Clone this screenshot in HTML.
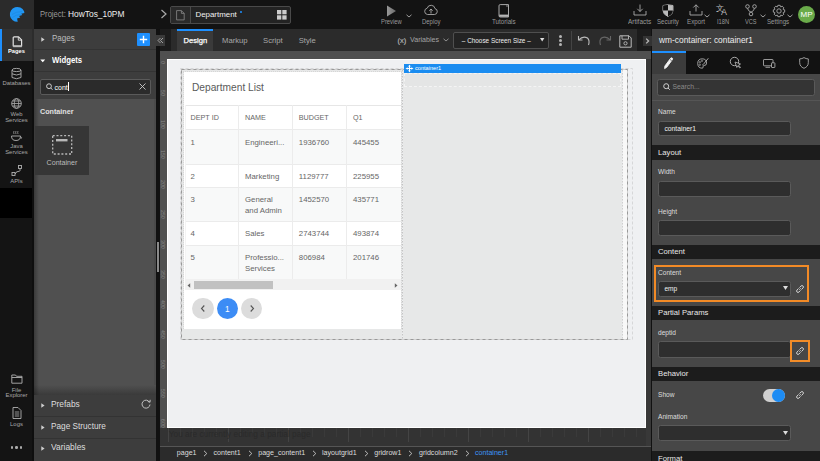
<!DOCTYPE html>
<html><head><meta charset="utf-8">
<style>
*{box-sizing:border-box;margin:0;padding:0}
html,body{width:820px;height:461px;overflow:hidden}
body{position:relative;background:#141414;font-family:"Liberation Sans",sans-serif;color:#ddd}
.a{position:absolute}
.t{position:absolute;white-space:nowrap;line-height:1}
svg{position:absolute;overflow:visible}
</style></head><body>
<div class="a" style="left:0px;top:0px;width:820px;height:29px;background:#131313;"></div>
<div class="a" style="left:0px;top:0px;width:34px;height:29px;background:#2b2b2b;"></div>
<div class="a" style="left:0px;top:29px;width:32px;height:432px;background:#141414;"></div>
<div class="a" style="left:32px;top:29px;width:2px;height:432px;background:#0e0e0e;"></div>
<div class="a" style="left:32px;top:29px;width:2px;height:32px;background:#2c2c2c;"></div>
<div class="a" style="left:0px;top:29px;width:32px;height:32px;background:#333;"></div>
<div class="a" style="left:0px;top:29px;width:2px;height:32px;background:#1e90ff;"></div>
<div class="a" style="left:0px;top:188px;width:32px;height:30px;background:#000;"></div>
<div class="a" style="left:34px;top:29px;width:122px;height:432px;background:#505050;"></div>
<div class="a" style="left:34px;top:29px;width:122px;height:21px;background:#3d3d3d;border-bottom:1px solid #333"></div>
<div class="a" style="left:34px;top:50px;width:122px;height:22px;background:#3d3d3d;border-bottom:1px solid #333"></div>
<div class="a" style="left:34px;top:72px;width:122px;height:27px;background:#3d3d3d;"></div>
<div class="a" style="left:34px;top:385px;width:122px;height:10px;background:linear-gradient(#505050,#3a3a3a);"></div>
<div class="a" style="left:34px;top:395px;width:122px;height:66px;background:#3d3d3d;"></div>
<div class="a" style="left:34px;top:416px;width:122px;height:1px;background:#333;"></div>
<div class="a" style="left:34px;top:438px;width:122px;height:1px;background:#333;"></div>
<div class="a" style="left:154px;top:99px;width:2px;height:286px;background:#4a4a4a;"></div>
<div class="a" style="left:34px;top:99px;width:5px;height:296px;background:linear-gradient(to right,rgba(0,0,0,0.28),rgba(0,0,0,0));"></div>
<div class="a" style="left:156px;top:29px;width:4px;height:432px;background:#111;"></div>
<div class="a" style="left:157px;top:242px;width:2px;height:30px;background:#8a8a8a;"></div>
<div class="a" style="left:160px;top:29px;width:492px;height:22px;background:#1c1c1c;"></div>
<div class="a" style="left:171px;top:29px;width:466px;height:22px;background:#2b2b2b;"></div>
<div class="a" style="left:177px;top:29px;width:36px;height:22px;background:#3a3a3a;border-top:2px solid #1e90ff"></div>
<div class="a" style="left:160px;top:51px;width:492px;height:395px;background:#333;"></div>
<div class="a" style="left:160px;top:51px;width:491px;height:8px;background:#505050;"></div>
<div class="a" style="left:160px;top:51px;width:7px;height:377px;background:#505050;"></div>
<div class="a" style="left:167px;top:59px;width:478.5px;height:369px;background:#eff0f2;border:1px solid #fff"></div>
<div class="a" style="left:160px;top:446px;width:492px;height:15px;background:#2b2b2b;border-top:1px solid #555"></div>
<div class="a" style="left:646px;top:59px;width:5px;height:387px;background:#383838;"></div>
<div class="a" style="left:651px;top:29px;width:1px;height:432px;background:#111;"></div>
<div class="a" style="left:652px;top:29px;width:168px;height:432px;background:#474747;"></div>
<div class="a" style="left:652px;top:29px;width:168px;height:22px;background:#404040;"></div>
<div class="a" style="left:652px;top:51px;width:168px;height:23px;background:#121212;"></div>
<div class="a" style="left:652px;top:51px;width:34px;height:23px;background:#3c3c3c;border-top:2px solid #1e90ff"></div>
<svg style="left:8px;top:6px" width="18" height="18" viewBox="0 0 18 18"><path d="M16.1 5.3 A7.45 7.45 0 1 0 9.7 15.8 L9.1 12.5 L12.2 11.4 L11.1 10.0 L14.4 9.0 L13.2 7.8 L16.4 7.0 Z" fill="#2196f3"/><path d="M4 8.5 Q8 5.5 14 5.6 M4.5 11.5 Q8 8.5 12.5 8.6" stroke="#1b86dc" stroke-width="0.6" fill="none"/></svg>
<div class="t" style="left:40.00px;top:10.34px;font-size:8.7px;color:#9a9a9a;transform:scaleX(0.878);transform-origin:0 0;">Project:</div>
<div class="t" style="left:68.40px;top:10.34px;font-size:8.7px;color:#eeeeee;transform:scaleX(0.966);transform-origin:0 0;">HowTos_10PM</div>
<svg style="left:160px;top:8.8px" width="8" height="10" viewBox="0 0 8 10"><path d="M1.5 1 L6 5 L1.5 9" stroke="#aaa" stroke-width="1.2" fill="none"/></svg>
<div class="a" style="left:170px;top:6px;width:120.5px;height:17.7px;background:#232323;border:1px solid #4a4a4a;border-radius:2px"></div>
<div class="a" style="left:171px;top:7px;width:18.5px;height:15.7px;background:#2a2a2a;"></div>
<div class="a" style="left:189.5px;top:6px;width:1px;height:17.7px;background:#4a4a4a;"></div>
<svg style="left:176px;top:10px" width="9" height="10.5" viewBox="0 0 9 10.5"><path d="M0.6 0.6 H5.4 L8.2 3.4 V9.9 H0.6 Z M5.4 0.6 V3.4 H8.2" stroke="#8a8a8a" stroke-width="0.8" fill="none"/></svg>
<div class="t" style="left:195.50px;top:11.31px;font-size:7.9px;color:#f0f0f0;">Department</div>
<div class="a" style="left:239.5px;top:10.5px;width:2px;height:2px;background:#1e90ff;border-radius:1px"></div>
<svg style="left:277px;top:10px" width="10" height="10" viewBox="0 0 10 10"><rect x="0" y="0" width="4.3" height="4.3" fill="#ccc"/><rect x="5.3" y="0" width="4.3" height="4.3" fill="#ccc"/><rect x="0" y="5.3" width="4.3" height="4.3" fill="#ccc"/><rect x="5.3" y="5.3" width="4.3" height="4.3" fill="#ccc"/></svg>
<svg style="left:386px;top:4.5px" width="11" height="12" viewBox="0 0 11 12"><defs><linearGradient id="pg" x1="0" x2="1"><stop offset="0" stop-color="#999"/><stop offset="1" stop-color="#6a6a6a"/></linearGradient></defs><path d="M1 0.5 L10 6 L1 11.5 Z" fill="url(#pg)"/></svg>
<div class="t" style="left:381.10px;top:18.53px;font-size:6.7px;color:#9a9a9a;transform:scaleX(0.873);transform-origin:0 0;">Preview</div>
<svg style="left:405.6px;top:13.8px" width="6" height="4" viewBox="0 0 6 4"><path d="M0.5 0.8 L3 3 L5.5 0.8" stroke="#aaa" stroke-width="0.9" fill="none"/></svg>
<svg style="left:424px;top:4px" width="14" height="12" viewBox="0 0 14 12"><path d="M3.5 10.5 H10.5 A3 3 0 0 0 11 4.6 A4 4 0 0 0 3.2 4.2 A3.2 3.2 0 0 0 3.5 10.5 Z" stroke="#aaa" stroke-width="0.9" fill="none"/><path d="M7 9.5 V5 M5.3 6.7 L7 5 L8.7 6.7" stroke="#aaa" stroke-width="0.9" fill="none"/></svg>
<div class="t" style="left:421.75px;top:18.53px;font-size:6.7px;color:#9a9a9a;transform:scaleX(0.887);transform-origin:0 0;">Deploy</div>
<svg style="left:498px;top:3.5px" width="12" height="14" viewBox="0 0 12 14"><path d="M1 1.8 Q1 0.6 2.2 0.6 H10.5 V13 H2.2 Q1 13 1 11.8 Z" stroke="#aaa" stroke-width="1" fill="none"/><rect x="1.2" y="10.6" width="9" height="2.2" fill="#b5b5b5"/><path d="M9 0.6 V3" stroke="#aaa" stroke-width="0.8"/></svg>
<div class="t" style="left:491.90px;top:18.53px;font-size:6.7px;color:#9a9a9a;transform:scaleX(0.928);transform-origin:0 0;">Tutorials</div>
<svg style="left:633px;top:4px" width="14" height="12" viewBox="0 0 14 12"><path d="M7 0.5 V7.5 M4.3 4.8 L7 7.5 L9.7 4.8" stroke="#aaa" stroke-width="0.9" fill="none"/><path d="M1 7 V11 H13 V7" stroke="#aaa" stroke-width="0.9" fill="none"/></svg>
<div class="t" style="left:628.40px;top:18.53px;font-size:6.7px;color:#9a9a9a;transform:scaleX(0.959);transform-origin:0 0;">Artifacts</div>
<svg style="left:662px;top:4px" width="12" height="13" viewBox="0 0 12 13"><path d="M1 1.5 Q6 0 11 1.5 V6.5 Q11 10.5 6 12.5 Q1 10.5 1 6.5 Z" stroke="#bbb" stroke-width="0.9" fill="#222"/><path d="M6 1 V6.5 H1.2 V1.6 Q3.5 0.9 6 1 Z" fill="#111"/><path d="M6 6.5 H10.9 Q10.8 10.3 6 12.4 Z" fill="#111"/><path d="M6 1 Q8.5 0.9 10.9 1.6 V6.5 H6 Z" fill="#bbb"/><path d="M6 6.5 V12.4 Q1.2 10.3 1.1 6.5 Z" fill="#bbb"/></svg>
<div class="t" style="left:657.05px;top:18.53px;font-size:6.7px;color:#9a9a9a;transform:scaleX(0.905);transform-origin:0 0;">Security</div>
<svg style="left:689px;top:4px" width="14" height="12" viewBox="0 0 14 12"><path d="M7 7.5 V0.8 M4.3 3.5 L7 0.8 L9.7 3.5" stroke="#aaa" stroke-width="0.9" fill="none"/><path d="M1 7 V11 H13 V7" stroke="#aaa" stroke-width="0.9" fill="none"/></svg>
<div class="t" style="left:686.60px;top:18.53px;font-size:6.7px;color:#9a9a9a;transform:scaleX(0.930);transform-origin:0 0;">Export</div>
<svg style="left:704px;top:13.8px" width="6" height="4" viewBox="0 0 6 4"><path d="M0.5 0.8 L3 3 L5.5 0.8" stroke="#aaa" stroke-width="0.9" fill="none"/></svg>
<svg style="left:716px;top:3px" width="14" height="13" viewBox="0 0 14 13"><text x="0" y="8" font-size="8" fill="#bbb" font-family="Liberation Sans">文</text><text x="5" y="12" font-size="9" fill="#bbb" font-family="Liberation Sans">A</text></svg>
<div class="t" style="left:716.90px;top:18.53px;font-size:6.7px;color:#9a9a9a;transform:scaleX(0.862);transform-origin:0 0;">I18N</div>
<svg style="left:745px;top:4px" width="12" height="12" viewBox="0 0 12 12"><circle cx="2.5" cy="2.5" r="1.8" stroke="#aaa" stroke-width="0.9" fill="none"/><circle cx="9.5" cy="2.5" r="1.8" stroke="#aaa" stroke-width="0.9" fill="none"/><circle cx="6" cy="10" r="1.8" stroke="#aaa" stroke-width="0.9" fill="none"/><path d="M2.5 4.3 Q3 7 6 8.2 Q9 7 9.5 4.3" stroke="#aaa" stroke-width="0.9" fill="none"/></svg>
<div class="t" style="left:745.20px;top:18.53px;font-size:6.7px;color:#9a9a9a;transform:scaleX(0.842);transform-origin:0 0;">VCS</div>
<svg style="left:759.7px;top:13.8px" width="6" height="4" viewBox="0 0 6 4"><path d="M0.5 0.8 L3 3 L5.5 0.8" stroke="#aaa" stroke-width="0.9" fill="none"/></svg>
<svg style="left:772.5px;top:4.5px" width="12" height="12" viewBox="0 0 12 12"><path d="M10.26 4.54 L11.68 4.85 L11.68 7.15 L10.26 7.46 L10.04 7.98 L10.83 9.20 L9.20 10.83 L7.98 10.04 L7.46 10.26 L7.15 11.68 L4.85 11.68 L4.54 10.26 L4.02 10.04 L2.80 10.83 L1.17 9.20 L1.96 7.98 L1.74 7.46 L0.32 7.15 L0.32 4.85 L1.74 4.54 L1.96 4.02 L1.17 2.80 L2.80 1.17 L4.02 1.96 L4.54 1.74 L4.85 0.32 L7.15 0.32 L7.46 1.74 L7.98 1.96 L9.20 1.17 L10.83 2.80 L10.04 4.02 Z" stroke="#aaa" stroke-width="0.9" fill="none" stroke-linejoin="round"/><circle cx="6" cy="6" r="2.2" stroke="#aaa" stroke-width="0.9" fill="none"/></svg>
<div class="t" style="left:767.40px;top:18.53px;font-size:6.7px;color:#9a9a9a;transform:scaleX(0.917);transform-origin:0 0;">Settings</div>
<svg style="left:787px;top:13.8px" width="6" height="4" viewBox="0 0 6 4"><path d="M0.5 0.8 L3 3 L5.5 0.8" stroke="#aaa" stroke-width="0.9" fill="none"/></svg>
<div class="a" style="left:798px;top:6px;width:17px;height:17px;background:#6aab4a;border-radius:50%"></div>
<div class="t" style="left:800.50px;top:10.83px;font-size:8px;color:#ffffff;">MP</div>
<svg style="left:11.5px;top:36px" width="11" height="12" viewBox="0 0 11 12"><path d="M1.2 1.8 Q1.2 0.8 2.2 0.8 H6.6 L9.6 3.8 V10 H1.2 Z" stroke="#e2e2e2" stroke-width="1.2" fill="none" stroke-linejoin="round"/><path d="M6.3 1 V4.2 H9.4" stroke="#e2e2e2" stroke-width="0.9" fill="none"/><rect x="1.2" y="9.4" width="8.6" height="1.8" fill="#bdbdbd"/></svg>
<div class="t" style="left:8.25px;top:48.45px;font-size:6.2px;color:#ffffff;font-weight:bold;transform:scaleX(0.925);transform-origin:0 0;">Pages</div>
<svg style="left:11px;top:68px" width="11" height="12" viewBox="0 0 11 12"><ellipse cx="5.5" cy="2" rx="4.5" ry="1.6" stroke="#b0b0b0" stroke-width="0.9" fill="none"/><path d="M1 2 V9.5 Q5.5 12 10 9.5 V2 M1 5.8 Q5.5 8.2 10 5.8" stroke="#b0b0b0" stroke-width="0.9" fill="none"/></svg>
<div class="t" style="left:2.40px;top:81.01px;font-size:5.9px;color:#a8a8a8;">Databases</div>
<svg style="left:11px;top:98px" width="11" height="11" viewBox="0 0 11 11"><circle cx="5.5" cy="5.5" r="4.8" stroke="#b0b0b0" stroke-width="0.9" fill="none"/><ellipse cx="5.5" cy="5.5" rx="2.2" ry="4.8" stroke="#b0b0b0" stroke-width="0.8" fill="none"/><path d="M0.7 5.5 H10.3 M1.5 3 H9.5 M1.5 8 H9.5" stroke="#b0b0b0" stroke-width="0.8"/></svg>
<div class="t" style="left:10.49px;top:111.51px;font-size:5.9px;color:#a8a8a8;">Web</div>
<div class="t" style="left:5.19px;top:117.76px;font-size:5.9px;color:#a8a8a8;">Services</div>
<svg style="left:10px;top:130px" width="13" height="12" viewBox="0 0 13 12"><path d="M1.5 6 H10.5 Q10.5 10.5 6 10.5 Q1.5 10.5 1.5 6 Z" stroke="#b0b0b0" stroke-width="0.9" fill="none"/><path d="M10.5 7 Q12.5 7 11 8.8" stroke="#b0b0b0" stroke-width="0.8" fill="none"/><path d="M4 1 Q3.3 2.5 4 4 M6 1 Q5.3 2.5 6 4 M8 1 Q7.3 2.5 8 4" stroke="#b0b0b0" stroke-width="0.7" fill="none"/></svg>
<div class="t" style="left:10.27px;top:143.51px;font-size:5.9px;color:#a8a8a8;">Java</div>
<div class="t" style="left:5.19px;top:149.76px;font-size:5.9px;color:#a8a8a8;">Services</div>
<svg style="left:11px;top:165px" width="12" height="12" viewBox="0 0 12 12"><rect x="7.5" y="0.5" width="3" height="3" stroke="#b0b0b0" stroke-width="0.9" fill="none"/><rect x="1" y="7.5" width="3" height="3" stroke="#b0b0b0" stroke-width="0.9" fill="none"/><path d="M9 3.5 V5.5 Q9 6.5 7 6.5 Q5 6.5 5 8 L4 9" stroke="#b0b0b0" stroke-width="0.9" fill="none"/></svg>
<div class="t" style="left:10.27px;top:178.51px;font-size:5.9px;color:#a8a8a8;">APIs</div>
<svg style="left:10.5px;top:374px" width="12" height="10" viewBox="0 0 12 10"><path d="M0.8 1 H4.5 L5.5 2.3 H11 V9.2 H0.8 Z M0.8 3.5 H11" stroke="#b0b0b0" stroke-width="0.9" fill="none"/></svg>
<div class="t" style="left:11.75px;top:387.51px;font-size:5.9px;color:#a8a8a8;">File</div>
<div class="t" style="left:5.52px;top:393.31px;font-size:5.9px;color:#a8a8a8;">Explorer</div>
<svg style="left:11.5px;top:407px" width="10" height="12" viewBox="0 0 10 12"><path d="M1 0.5 H6 L9 3.5 V11.5 H1 Z" stroke="#b0b0b0" stroke-width="0.9" fill="none"/><path d="M2.8 5 H7.2 M2.8 7 H7.2 M2.8 9 H7.2" stroke="#b0b0b0" stroke-width="0.8"/></svg>
<div class="t" style="left:10.10px;top:422.01px;font-size:5.9px;color:#a8a8a8;">Logs</div>
<div class="a" style="left:11.0px;top:446.2px;width:2.4px;height:2.4px;background:#aaa;border-radius:50%"></div>
<div class="a" style="left:15.3px;top:446.2px;width:2.4px;height:2.4px;background:#aaa;border-radius:50%"></div>
<div class="a" style="left:19.6px;top:446.2px;width:2.4px;height:2.4px;background:#aaa;border-radius:50%"></div>
<svg style="left:41px;top:37px" width="4" height="5" viewBox="0 0 4 5"><path d="M0.3 0.3 L3.6 2.5 L0.3 4.7 Z" fill="#cfcfcf"/></svg>
<div class="t" style="left:51.70px;top:34.27px;font-size:8.9px;color:#bdbdbd;transform:scaleX(0.900);transform-origin:0 0;">Pages</div>
<div class="a" style="left:137px;top:33px;width:13px;height:13px;background:#1e90ff;border-radius:1px"></div>
<svg style="left:137px;top:33px" width="13" height="13" viewBox="0 0 13 13"><path d="M6.5 2.8 V10.2 M2.8 6.5 H10.2" stroke="#fff" stroke-width="1.4"/></svg>
<svg style="left:40px;top:59px" width="6" height="4" viewBox="0 0 6 4"><path d="M0.3 0.5 L5.2 0.5 L2.75 3.3 Z" fill="#ffffff"/></svg>
<div class="t" style="left:51.70px;top:55.90px;font-size:8.5px;color:#ffffff;font-weight:bold;transform:scaleX(0.913);transform-origin:0 0;">Widgets</div>
<div class="a" style="left:39.5px;top:78.5px;width:111px;height:16px;background:#2b2b2b;border:1px solid #5a5a5a;border-radius:2px"></div>
<svg style="left:45.5px;top:82.5px" width="7" height="8" viewBox="0 0 7 8"><circle cx="3" cy="3.2" r="2.4" stroke="#ddd" stroke-width="0.9" fill="none"/><path d="M4.8 5 L6.5 6.8" stroke="#ddd" stroke-width="0.9"/></svg>
<div class="t" style="left:54.50px;top:83.57px;font-size:7px;color:#ffffff;">cont</div>
<div class="a" style="left:68.23px;top:82px;width:0.8px;height:9px;background:#ffffff;"></div>
<svg style="left:138.7px;top:83px" width="7" height="7" viewBox="0 0 7 7"><path d="M0.5 0.5 L6.5 6.5 M6.5 0.5 L0.5 6.5" stroke="#ccc" stroke-width="0.9"/></svg>
<div class="t" style="left:40.00px;top:107.61px;font-size:7.2px;color:#e0e0e0;font-weight:600;">Container</div>
<div class="a" style="left:35px;top:126px;width:54px;height:49px;background:#363636;"></div>
<svg style="left:52px;top:135px" width="21" height="20" viewBox="0 0 21 20"><rect x="0.7" y="0.7" width="19" height="18.3" stroke="#b8b8b8" stroke-width="1.3" stroke-dasharray="2 1.8" fill="none"/><rect x="4" y="4" width="11.5" height="2.4" fill="#b8b8b8"/></svg>
<div class="t" style="left:46.61px;top:160.19px;font-size:7.1px;color:#bdbdbd;">Container</div>
<svg style="left:41px;top:403px" width="4" height="5" viewBox="0 0 4 5"><path d="M0.3 0.3 L3.6 2.5 L0.3 4.7 Z" fill="#cfcfcf"/></svg>
<div class="t" style="left:51.40px;top:400.35px;font-size:8.8px;color:#dddddd;transform:scaleX(0.950);transform-origin:0 0;">Prefabs</div>
<svg style="left:141px;top:399px" width="10" height="10" viewBox="0 0 10 10"><path d="M8.5 3.2 A4 4 0 1 0 9 5.5" stroke="#ccc" stroke-width="0.9" fill="none"/><path d="M6.8 2.5 L9 3.2 L9.2 0.8" stroke="#ccc" stroke-width="0.9" fill="none"/></svg>
<svg style="left:41px;top:424.5px" width="4" height="5" viewBox="0 0 4 5"><path d="M0.3 0.3 L3.6 2.5 L0.3 4.7 Z" fill="#cfcfcf"/></svg>
<div class="t" style="left:51.40px;top:421.75px;font-size:8.8px;color:#dddddd;transform:scaleX(0.935);transform-origin:0 0;">Page Structure</div>
<svg style="left:41px;top:446px" width="4" height="5" viewBox="0 0 4 5"><path d="M0.3 0.3 L3.6 2.5 L0.3 4.7 Z" fill="#cfcfcf"/></svg>
<div class="t" style="left:51.40px;top:443.35px;font-size:8.8px;color:#dddddd;transform:scaleX(0.960);transform-origin:0 0;">Variables</div>
<div class="a" style="left:156px;top:35px;width:9px;height:11px;background:#3a3a3a;"></div>
<svg style="left:156px;top:35px" width="9" height="11" viewBox="0 0 9 11"><path d="M4.5 3 L2 5.5 L4.5 8 M7 3 L4.5 5.5 L7 8" stroke="#aaa" stroke-width="0.9" fill="none"/></svg>
<div class="t" style="left:183.50px;top:36.87px;font-size:7.6px;color:#ffffff;-webkit-text-stroke:0.25px #fff;">Design</div>
<div class="t" style="left:222.00px;top:36.78px;font-size:7.7px;color:#a8a8a8;">Markup</div>
<div class="t" style="left:263.00px;top:36.78px;font-size:7.7px;color:#a8a8a8;">Script</div>
<div class="t" style="left:298.70px;top:36.78px;font-size:7.7px;color:#a8a8a8;">Style</div>
<div class="t" style="left:397.50px;top:36.95px;font-size:7.5px;color:#b0b0b0;-webkit-text-stroke:0.2px #b0b0b0;">(x)</div>
<div class="t" style="left:410.00px;top:37.29px;font-size:7.1px;color:#a4a4a4;">Variables</div>
<svg style="left:443px;top:38px" width="6" height="4" viewBox="0 0 6 4"><path d="M0.5 0.8 L3 3 L5.5 0.8" stroke="#999" stroke-width="0.9" fill="none"/></svg>
<div class="a" style="left:453px;top:31.5px;width:96px;height:17px;background:#232323;border:1px solid #4f4f4f;border-radius:2px"></div>
<div class="t" style="left:461.80px;top:37.88px;font-size:6.4px;color:#eeeeee;">– Choose Screen Size –</div>
<svg style="left:540px;top:37.5px" width="5" height="4" viewBox="0 0 5 4"><path d="M0 0 L4.4 0 L2.2 3.6 Z" fill="#ddd"/></svg>
<div class="a" style="left:558.6px;top:34.699999999999996px;width:3.4px;height:3.4px;background:#b4b4b4;border-radius:50%"></div>
<div class="a" style="left:558.6px;top:38.699999999999996px;width:3.4px;height:3.4px;background:#b4b4b4;border-radius:50%"></div>
<div class="a" style="left:558.6px;top:42.8px;width:3.4px;height:3.4px;background:#b4b4b4;border-radius:50%"></div>
<div class="a" style="left:571px;top:31px;width:1px;height:19px;background:#444;"></div>
<svg style="left:577px;top:34px" width="14" height="12" viewBox="0 0 14 12"><path d="M1.5 2 V6 H5.5" stroke="#bbb" stroke-width="1.1" fill="none"/><path d="M1.8 5.8 Q6 1.5 10.5 4 Q13 6.5 11.5 11" stroke="#bbb" stroke-width="1.1" fill="none"/></svg>
<svg style="left:598px;top:34px" width="14" height="12" viewBox="0 0 14 12"><path d="M12.5 2 V6 H8.5" stroke="#666" stroke-width="1.1" fill="none"/><path d="M12.2 5.8 Q8 1.5 3.5 4 Q1 6.5 2.5 11" stroke="#666" stroke-width="1.1" fill="none"/></svg>
<svg style="left:619px;top:34.5px" width="13" height="13" viewBox="0 0 13 13"><path d="M0.8 0.8 H10 L12.2 3 V12.2 H0.8 Z" stroke="#bbb" stroke-width="1" fill="none"/><path d="M3 0.8 V4.2 H9.5 V0.8" stroke="#bbb" stroke-width="0.9" fill="none"/><circle cx="6.5" cy="8.3" r="1.6" stroke="#bbb" stroke-width="0.9" fill="none"/></svg>
<div class="a" style="left:643px;top:36px;width:9px;height:10px;background:#333;"></div>
<svg style="left:643px;top:36px" width="9" height="10" viewBox="0 0 9 10"><path d="M3.2 2.6 L5.6 5 L3.2 7.4" stroke="#b8b8b8" stroke-width="1.3" fill="none"/></svg>
<div class="t" style="left:0.00px;top:-4.40px;font-size:5.2px;color:#8c8c8c;left:159.6px;top:60.5px;writing-mode:vertical-rl;">0</div>
<div class="t" style="left:0.00px;top:-4.40px;font-size:5.2px;color:#8c8c8c;left:159.6px;top:90.4px;writing-mode:vertical-rl;">50</div>
<div class="t" style="left:0.00px;top:-4.40px;font-size:5.2px;color:#8c8c8c;left:159.6px;top:120.3px;writing-mode:vertical-rl;">100</div>
<div class="t" style="left:0.00px;top:-4.40px;font-size:5.2px;color:#8c8c8c;left:159.6px;top:150.2px;writing-mode:vertical-rl;">150</div>
<div class="t" style="left:0.00px;top:-4.40px;font-size:5.2px;color:#8c8c8c;left:159.6px;top:180.1px;writing-mode:vertical-rl;">200</div>
<div class="t" style="left:0.00px;top:-4.40px;font-size:5.2px;color:#8c8c8c;left:159.6px;top:210.0px;writing-mode:vertical-rl;">250</div>
<div class="t" style="left:0.00px;top:-4.40px;font-size:5.2px;color:#8c8c8c;left:159.6px;top:239.9px;writing-mode:vertical-rl;">300</div>
<div class="t" style="left:0.00px;top:-4.40px;font-size:5.2px;color:#8c8c8c;left:159.6px;top:269.8px;writing-mode:vertical-rl;">350</div>
<div class="t" style="left:0.00px;top:-4.40px;font-size:5.2px;color:#8c8c8c;left:159.6px;top:299.7px;writing-mode:vertical-rl;">400</div>
<div class="t" style="left:0.00px;top:-4.40px;font-size:5.2px;color:#8c8c8c;left:159.6px;top:329.6px;writing-mode:vertical-rl;">450</div>
<div class="t" style="left:0.00px;top:-4.40px;font-size:5.2px;color:#8c8c8c;left:159.6px;top:359.5px;writing-mode:vertical-rl;">500</div>
<div class="t" style="left:0.00px;top:-4.40px;font-size:5.2px;color:#8c8c8c;left:159.6px;top:389.4px;writing-mode:vertical-rl;">550</div>
<div class="t" style="left:0.00px;top:-4.40px;font-size:5.2px;color:#8c8c8c;left:159.6px;top:419.3px;writing-mode:vertical-rl;">600</div>
<div class="a" style="left:168px;top:428px;width:1px;height:14px;background:#444;"></div>
<div class="a" style="left:180px;top:428px;width:1px;height:9px;background:#3a3a3a;"></div>
<div class="a" style="left:192px;top:428px;width:1px;height:9px;background:#3a3a3a;"></div>
<div class="a" style="left:204px;top:428px;width:1px;height:9px;background:#3a3a3a;"></div>
<div class="a" style="left:216px;top:428px;width:1px;height:9px;background:#3a3a3a;"></div>
<div class="a" style="left:228px;top:428px;width:1px;height:14px;background:#444;"></div>
<div class="a" style="left:240px;top:428px;width:1px;height:9px;background:#3a3a3a;"></div>
<div class="a" style="left:252px;top:428px;width:1px;height:9px;background:#3a3a3a;"></div>
<div class="a" style="left:264px;top:428px;width:1px;height:9px;background:#3a3a3a;"></div>
<div class="a" style="left:276px;top:428px;width:1px;height:9px;background:#3a3a3a;"></div>
<div class="a" style="left:288px;top:428px;width:1px;height:14px;background:#444;"></div>
<div class="a" style="left:300px;top:428px;width:1px;height:9px;background:#3a3a3a;"></div>
<div class="a" style="left:312px;top:428px;width:1px;height:9px;background:#3a3a3a;"></div>
<div class="a" style="left:324px;top:428px;width:1px;height:9px;background:#3a3a3a;"></div>
<div class="a" style="left:336px;top:428px;width:1px;height:9px;background:#3a3a3a;"></div>
<div class="a" style="left:348px;top:428px;width:1px;height:14px;background:#444;"></div>
<div class="a" style="left:360px;top:428px;width:1px;height:9px;background:#3a3a3a;"></div>
<div class="a" style="left:372px;top:428px;width:1px;height:9px;background:#3a3a3a;"></div>
<div class="a" style="left:384px;top:428px;width:1px;height:9px;background:#3a3a3a;"></div>
<div class="a" style="left:396px;top:428px;width:1px;height:9px;background:#3a3a3a;"></div>
<div class="a" style="left:408px;top:428px;width:1px;height:14px;background:#444;"></div>
<div class="a" style="left:420px;top:428px;width:1px;height:9px;background:#3a3a3a;"></div>
<div class="a" style="left:432px;top:428px;width:1px;height:9px;background:#3a3a3a;"></div>
<div class="a" style="left:444px;top:428px;width:1px;height:9px;background:#3a3a3a;"></div>
<div class="a" style="left:456px;top:428px;width:1px;height:9px;background:#3a3a3a;"></div>
<div class="a" style="left:468px;top:428px;width:1px;height:14px;background:#444;"></div>
<div class="a" style="left:480px;top:428px;width:1px;height:9px;background:#3a3a3a;"></div>
<div class="a" style="left:492px;top:428px;width:1px;height:9px;background:#3a3a3a;"></div>
<div class="a" style="left:504px;top:428px;width:1px;height:9px;background:#3a3a3a;"></div>
<div class="a" style="left:516px;top:428px;width:1px;height:9px;background:#3a3a3a;"></div>
<div class="a" style="left:528px;top:428px;width:1px;height:14px;background:#444;"></div>
<div class="a" style="left:540px;top:428px;width:1px;height:9px;background:#3a3a3a;"></div>
<div class="a" style="left:552px;top:428px;width:1px;height:9px;background:#3a3a3a;"></div>
<div class="a" style="left:564px;top:428px;width:1px;height:9px;background:#3a3a3a;"></div>
<div class="a" style="left:576px;top:428px;width:1px;height:9px;background:#3a3a3a;"></div>
<div class="a" style="left:588px;top:428px;width:1px;height:14px;background:#444;"></div>
<div class="a" style="left:600px;top:428px;width:1px;height:9px;background:#3a3a3a;"></div>
<div class="a" style="left:612px;top:428px;width:1px;height:9px;background:#3a3a3a;"></div>
<div class="a" style="left:624px;top:428px;width:1px;height:9px;background:#3a3a3a;"></div>
<div class="a" style="left:636px;top:428px;width:1px;height:9px;background:#3a3a3a;"></div>
<div class="t" style="left:168.80px;top:429.57px;font-size:8.3px;color:#2a2a2a;">You are currently editing a partial page</div>
<div class="a" style="left:182px;top:70px;width:220px;height:269px;background:#e7e8e8;"></div>
<div class="a" style="left:182.5px;top:70.5px;width:219px;height:258.5px;background:transparent;border:1px dotted #d6d6d6"></div>
<div class="a" style="left:183.5px;top:71.5px;width:217.5px;height:257.5px;background:#ffffff;"></div>
<svg style="left:402px;top:70px" width="1" height="269" viewBox="0 0 1 269"><path d="M0.5 0 V269" stroke="#c4c4c4" stroke-width="1" stroke-dasharray="1.5 1.5"/></svg>
<div class="a" style="left:403px;top:70px;width:219px;height:269px;background:#e7e8e8;"></div>
<svg style="left:622px;top:70px" width="1" height="269" viewBox="0 0 1 269"><path d="M0.5 0 V269" stroke="#cfcfcf" stroke-width="1" stroke-dasharray="1.5 1.5"/></svg>
<div class="a" style="left:623px;top:70px;width:4.5px;height:269px;background:#f8f8f8;"></div>
<svg style="left:180px;top:68px" width="454" height="273" viewBox="0 0 454 273"><rect x="0.5" y="0.5" width="452" height="271" stroke="#d6d7d8" stroke-width="1" fill="none" stroke-dasharray="3 2"/><rect x="1.5" y="1.5" width="446" height="270" stroke="#d0d0d0" stroke-width="1" fill="none"/><rect x="1.5" y="1.5" width="446" height="270" stroke="#999" stroke-width="1" fill="none" stroke-dasharray="3 3"/></svg>
<div class="a" style="left:404px;top:73px;width:217px;height:14px;background:#e4e5e5;border:1px dashed #f4f4f4"></div>
<div class="a" style="left:404px;top:64px;width:217px;height:9px;background:#1a8cf0;"></div>
<svg style="left:406px;top:65px" width="7" height="7" viewBox="0 0 7 7"><path d="M3.5 0.3 V6.7 M0.3 3.5 H6.7" stroke="#fff" stroke-width="1.1"/><path d="M2.4 1.4 L3.5 0.3 L4.6 1.4 M2.4 5.6 L3.5 6.7 L4.6 5.6 M1.4 2.4 L0.3 3.5 L1.4 4.6 M5.6 2.4 L6.7 3.5 L5.6 4.6" stroke="#fff" stroke-width="0.8" fill="none"/></svg>
<div class="t" style="left:415.00px;top:66.46px;font-size:5.6px;color:#ffffff;">container1</div>
<div class="t" style="left:191.70px;top:82.58px;font-size:10.3px;color:#5a5a5a;transform:scaleX(0.990);transform-origin:0 0;">Department List</div>
<div class="a" style="left:184.5px;top:105px;width:216.5px;height:1px;background:#e6e6e6;"></div>
<div class="a" style="left:184.5px;top:129px;width:216.5px;height:35px;background:#f8f9f9;"></div>
<div class="a" style="left:184.5px;top:164px;width:216.5px;height:23px;background:#ffffff;"></div>
<div class="a" style="left:184.5px;top:187px;width:216.5px;height:34px;background:#f8f9f9;"></div>
<div class="a" style="left:184.5px;top:221px;width:216.5px;height:24px;background:#ffffff;"></div>
<div class="a" style="left:184.5px;top:245px;width:216.5px;height:34px;background:#f8f9f9;"></div>
<div class="a" style="left:184.5px;top:129px;width:216.5px;height:1px;background:#ebebeb;"></div>
<div class="a" style="left:184.5px;top:164px;width:216.5px;height:1px;background:#ebebeb;"></div>
<div class="a" style="left:184.5px;top:187px;width:216.5px;height:1px;background:#ebebeb;"></div>
<div class="a" style="left:184.5px;top:221px;width:216.5px;height:1px;background:#ebebeb;"></div>
<div class="a" style="left:184.5px;top:245px;width:216.5px;height:1px;background:#ebebeb;"></div>
<div class="a" style="left:184.5px;top:105px;width:1px;height:174px;background:#f3f3f3;"></div>
<div class="a" style="left:238px;top:105px;width:1px;height:174px;background:#ececec;"></div>
<div class="a" style="left:292px;top:105px;width:1px;height:174px;background:#ececec;"></div>
<div class="a" style="left:346px;top:105px;width:1px;height:174px;background:#ececec;"></div>
<div class="t" style="left:190.60px;top:113.91px;font-size:7.2px;color:#666666;">DEPT ID</div>
<div class="t" style="left:245.00px;top:113.91px;font-size:7.2px;color:#666666;">NAME</div>
<div class="t" style="left:298.80px;top:113.91px;font-size:7.2px;color:#666666;">BUDGET</div>
<div class="t" style="left:353.00px;top:113.91px;font-size:7.2px;color:#666666;">Q1</div>
<div class="t" style="left:190.60px;top:139.20px;font-size:7.8px;color:#666666;">1</div>
<div class="t" style="left:245.00px;top:139.20px;font-size:7.8px;color:#666666;">Engineeri...</div>
<div class="t" style="left:298.80px;top:139.20px;font-size:7.8px;color:#666666;">1936760</div>
<div class="t" style="left:353.00px;top:139.20px;font-size:7.8px;color:#666666;">445455</div>
<div class="t" style="left:190.60px;top:172.90px;font-size:7.8px;color:#666666;">2</div>
<div class="t" style="left:245.00px;top:172.90px;font-size:7.8px;color:#666666;">Marketing</div>
<div class="t" style="left:298.80px;top:172.90px;font-size:7.8px;color:#666666;">1129777</div>
<div class="t" style="left:353.00px;top:172.90px;font-size:7.8px;color:#666666;">225955</div>
<div class="t" style="left:190.60px;top:196.10px;font-size:7.8px;color:#666666;">3</div>
<div class="t" style="left:245.00px;top:196.10px;font-size:7.8px;color:#666666;">General</div>
<div class="t" style="left:298.80px;top:196.10px;font-size:7.8px;color:#666666;">1452570</div>
<div class="t" style="left:353.00px;top:196.10px;font-size:7.8px;color:#666666;">435771</div>
<div class="t" style="left:245.00px;top:206.80px;font-size:7.8px;color:#666666;">and Admin</div>
<div class="t" style="left:190.60px;top:230.30px;font-size:7.8px;color:#666666;">4</div>
<div class="t" style="left:245.00px;top:230.30px;font-size:7.8px;color:#666666;">Sales</div>
<div class="t" style="left:298.80px;top:230.30px;font-size:7.8px;color:#666666;">2743744</div>
<div class="t" style="left:353.00px;top:230.30px;font-size:7.8px;color:#666666;">493874</div>
<div class="t" style="left:190.60px;top:253.90px;font-size:7.8px;color:#666666;">5</div>
<div class="t" style="left:245.00px;top:253.90px;font-size:7.8px;color:#666666;">Professio...</div>
<div class="t" style="left:298.80px;top:253.90px;font-size:7.8px;color:#666666;">806984</div>
<div class="t" style="left:353.00px;top:253.90px;font-size:7.8px;color:#666666;">201746</div>
<div class="t" style="left:245.00px;top:264.50px;font-size:7.8px;color:#666666;">Services</div>
<div class="a" style="left:184.5px;top:279px;width:216.5px;height:11.3px;background:#f1f1f1;"></div>
<div class="a" style="left:194.4px;top:281px;width:78.3px;height:7.5px;background:#c1c1c1;"></div>
<svg style="left:187px;top:282.5px" width="4" height="5" viewBox="0 0 4 5"><path d="M3.2 0.3 L0.5 2.5 L3.2 4.7 Z" fill="#666"/></svg>
<svg style="left:394px;top:282.5px" width="4" height="5" viewBox="0 0 4 5"><path d="M0.8 0.3 L3.5 2.5 L0.8 4.7 Z" fill="#666"/></svg>
<div class="a" style="left:192.25px;top:297.65px;width:21.5px;height:21.5px;background:#dcdcdc;border-radius:50%"></div>
<div class="a" style="left:216.55px;top:297.65px;width:21.5px;height:21.5px;background:#3c8cf5;border-radius:50%"></div>
<div class="a" style="left:240.75px;top:297.65px;width:21.5px;height:21.5px;background:#dcdcdc;border-radius:50%"></div>
<svg style="left:200px;top:305px" width="6" height="7" viewBox="0 0 6 7"><path d="M4.3 0.5 L1.5 3.5 L4.3 6.5" stroke="#555" stroke-width="1.1" fill="none"/></svg>
<svg style="left:248.5px;top:305px" width="6" height="7" viewBox="0 0 6 7"><path d="M1.7 0.5 L4.5 3.5 L1.7 6.5" stroke="#555" stroke-width="1.1" fill="none"/></svg>
<div class="t" style="left:224.99px;top:304.57px;font-size:8.3px;color:#ffffff;">1</div>
<div class="t" style="left:176.80px;top:450.09px;font-size:7.1px;color:#dcdcdc;">page1</div>
<div class="t" style="left:213.50px;top:450.09px;font-size:7.1px;color:#dcdcdc;">content1</div>
<div class="t" style="left:258.20px;top:450.09px;font-size:7.1px;color:#dcdcdc;">page_content1</div>
<div class="t" style="left:322.00px;top:450.09px;font-size:7.1px;color:#dcdcdc;">layoutgrid1</div>
<div class="t" style="left:374.20px;top:450.09px;font-size:7.1px;color:#dcdcdc;">gridrow1</div>
<div class="t" style="left:419.00px;top:450.09px;font-size:7.1px;color:#dcdcdc;">gridcolumn2</div>
<svg style="left:202.7px;top:450px" width="5" height="7" viewBox="0 0 5 7"><path d="M1 0.8 L3.8 3.5 L1 6.2" stroke="#ccc" stroke-width="0.9" fill="none"/></svg>
<svg style="left:247.8px;top:450px" width="5" height="7" viewBox="0 0 5 7"><path d="M1 0.8 L3.8 3.5 L1 6.2" stroke="#ccc" stroke-width="0.9" fill="none"/></svg>
<svg style="left:311.6px;top:450px" width="5" height="7" viewBox="0 0 5 7"><path d="M1 0.8 L3.8 3.5 L1 6.2" stroke="#ccc" stroke-width="0.9" fill="none"/></svg>
<svg style="left:364.4px;top:450px" width="5" height="7" viewBox="0 0 5 7"><path d="M1 0.8 L3.8 3.5 L1 6.2" stroke="#ccc" stroke-width="0.9" fill="none"/></svg>
<svg style="left:408.3px;top:450px" width="5" height="7" viewBox="0 0 5 7"><path d="M1 0.8 L3.8 3.5 L1 6.2" stroke="#ccc" stroke-width="0.9" fill="none"/></svg>
<svg style="left:464.6px;top:450px" width="5" height="7" viewBox="0 0 5 7"><path d="M1 0.8 L3.8 3.5 L1 6.2" stroke="#ccc" stroke-width="0.9" fill="none"/></svg>
<div class="t" style="left:475.00px;top:450.09px;font-size:7.1px;color:#3d94f5;">container1</div>
<div class="t" style="left:659.00px;top:35.89px;font-size:8.4px;color:#ededed;">wm-container: container1</div>
<svg style="left:663px;top:57px" width="11" height="13" viewBox="0 0 11 13"><path d="M1.6 11.6 L1.9 9 L7.6 1.3 Q8.3 0.5 9.2 1.1 Q10 1.8 9.4 2.6 L3.7 10.3 Z" stroke="#f4f4f4" stroke-width="0.9" fill="#f4f4f4" stroke-linejoin="round"/><path d="M6.9 2.4 L8.6 3.6" stroke="#3c3c3c" stroke-width="0.7"/></svg>
<svg style="left:697px;top:57.5px" width="12" height="11" viewBox="0 0 12 11"><path d="M5.2 0.8 Q0.8 0.9 0.7 5.3 Q0.7 10 5 10.2 Q6.4 10.2 6.1 8.8 Q5.8 7.6 7 7.5 Q9.6 7.6 9.6 5 Q9.5 0.8 5.2 0.8 Z" stroke="#bbb" stroke-width="0.8" fill="none"/><circle cx="2.9" cy="4.2" r="0.75" stroke="#bbb" stroke-width="0.6" fill="none"/><circle cx="5" cy="2.8" r="0.75" stroke="#bbb" stroke-width="0.6" fill="none"/><circle cx="2.8" cy="6.8" r="0.75" stroke="#bbb" stroke-width="0.6" fill="none"/><path d="M11.3 0.3 L6.8 5.8 Q6 6.8 5.4 7" stroke="#bbb" stroke-width="0.9" fill="none"/></svg>
<svg style="left:729px;top:56px" width="13" height="13" viewBox="0 0 13 13"><circle cx="5.5" cy="5.5" r="4.2" stroke="#bbb" stroke-width="0.9" fill="none"/><path d="M6 6 L11.5 8 L9.5 9 L11.5 11.5 L10.8 12 L8.8 9.8 L7.8 11.5 Z" stroke="#bbb" stroke-width="0.8" fill="#121212"/></svg>
<svg style="left:763px;top:59px" width="13" height="9" viewBox="0 0 13 9"><rect x="0.5" y="0.5" width="9.5" height="6.3" rx="0.6" stroke="#bbb" stroke-width="0.8" fill="none"/><path d="M2.5 8.3 H7" stroke="#bbb" stroke-width="0.8"/><rect x="8.5" y="3.8" width="3.4" height="4.7" rx="0.5" stroke="#bbb" stroke-width="0.8" fill="#121212"/></svg>
<svg style="left:799px;top:57px" width="10" height="12" viewBox="0 0 10 12"><path d="M5 0.6 Q7 1.9 9.3 1.9 V5.6 Q9.3 9.6 5 11.3 Q0.7 9.6 0.7 5.6 V1.9 Q3 1.9 5 0.6 Z" stroke="#bbb" stroke-width="0.8" fill="none"/></svg>
<div class="a" style="left:657px;top:79px;width:158px;height:16.5px;background:#343434;border:1px solid #5a5a5a;border-radius:2.5px"></div>
<svg style="left:663px;top:83px" width="8" height="8" viewBox="0 0 8 8"><circle cx="3.2" cy="3.2" r="2.5" stroke="#ddd" stroke-width="0.9" fill="none"/><path d="M5 5 L6.8 6.8" stroke="#ddd" stroke-width="0.9"/></svg>
<div class="t" style="left:672.50px;top:84.24px;font-size:6.8px;color:#8a8a8a;">Search...</div>
<div class="a" style="left:652px;top:100px;width:168px;height:1px;background:#555;"></div>
<div class="t" style="left:658.00px;top:108.81px;font-size:6.6px;color:#dddddd;">Name</div>
<div class="a" style="left:658px;top:120.7px;width:133px;height:15.6px;background:#2e2e2e;border:1px solid #5a5a5a;border-radius:2.5px"></div>
<div class="t" style="left:664.40px;top:125.64px;font-size:6.8px;color:#f0f0f0;">container1</div>
<div class="a" style="left:652px;top:145px;width:168px;height:15px;background:#1c1c1c;"></div>
<div class="t" style="left:658.00px;top:149.18px;font-size:7.7px;color:#e8e8e8;">Layout</div>
<div class="t" style="left:658.00px;top:169.41px;font-size:6.6px;color:#dddddd;">Width</div>
<div class="a" style="left:658px;top:181px;width:133px;height:16.4px;background:#2e2e2e;border:1px solid #5a5a5a;border-radius:2.5px"></div>
<div class="t" style="left:658.00px;top:209.01px;font-size:6.6px;color:#dddddd;">Height</div>
<div class="a" style="left:658px;top:220.3px;width:133px;height:16px;background:#2e2e2e;border:1px solid #5a5a5a;border-radius:2.5px"></div>
<div class="a" style="left:652px;top:245px;width:168px;height:14px;background:#1c1c1c;"></div>
<div class="t" style="left:658.00px;top:248.18px;font-size:7.7px;color:#e8e8e8;">Content</div>
<div class="a" style="left:654px;top:265.3px;width:155px;height:37.2px;background:transparent;border:2px solid #f28a26"></div>
<div class="t" style="left:658.00px;top:269.71px;font-size:6.6px;color:#dddddd;">Content</div>
<div class="a" style="left:658px;top:280.5px;width:133px;height:16px;background:#2e2e2e;border:1px solid #5a5a5a;border-radius:2.5px"></div>
<div class="t" style="left:664.40px;top:285.61px;font-size:6.6px;color:#eeeeee;">emp</div>
<svg style="left:782.5px;top:286px" width="6" height="5" viewBox="0 0 6 5"><path d="M0 0 L5 0 L2.5 4 Z" fill="#ddd"/></svg>
<svg style="left:795px;top:283.5px" width="10" height="10" viewBox="0 0 10 10"><path d="M4.3 5.7 L5.7 4.3" stroke="#ddd" stroke-width="0.9"/><path d="M3.6 4.4 L2 6 Q1 7 2 8 Q3 9 4 8 L5.6 6.4 M6.4 5.6 L8 4 Q9 3 8 2 Q7 1 6 2 L4.4 3.6" stroke="#ddd" stroke-width="0.9" fill="none"/></svg>
<div class="a" style="left:652px;top:306px;width:168px;height:14px;background:#1c1c1c;"></div>
<div class="t" style="left:658.00px;top:309.18px;font-size:7.7px;color:#e8e8e8;">Partial Params</div>
<div class="t" style="left:658.00px;top:330.01px;font-size:6.6px;color:#dddddd;">deptid</div>
<div class="a" style="left:658px;top:341.3px;width:133px;height:17px;background:#2e2e2e;border:1px solid #5a5a5a;border-radius:2.5px"></div>
<div class="a" style="left:790px;top:340.3px;width:20.3px;height:22.2px;background:transparent;border:2px solid #f28c28"></div>
<svg style="left:795px;top:346.2px" width="10" height="10" viewBox="0 0 10 10"><path d="M4.3 5.7 L5.7 4.3" stroke="#ddd" stroke-width="0.9"/><path d="M3.6 4.4 L2 6 Q1 7 2 8 Q3 9 4 8 L5.6 6.4 M6.4 5.6 L8 4 Q9 3 8 2 Q7 1 6 2 L4.4 3.6" stroke="#ddd" stroke-width="0.9" fill="none"/></svg>
<div class="a" style="left:652px;top:366.8px;width:168px;height:14px;background:#1c1c1c;"></div>
<div class="t" style="left:658.00px;top:369.98px;font-size:7.7px;color:#e8e8e8;">Behavior</div>
<div class="t" style="left:658.00px;top:391.81px;font-size:6.6px;color:#dddddd;">Show</div>
<div class="a" style="left:762.8px;top:388.6px;width:22.5px;height:13.4px;background:#d0d0d0;border-radius:7px"></div>
<div class="a" style="left:772.2px;top:388.6px;width:13.2px;height:13.4px;background:#1d8cf4;border-radius:50%"></div>
<svg style="left:795px;top:389.5px" width="10" height="10" viewBox="0 0 10 10"><path d="M4.3 5.7 L5.7 4.3" stroke="#ddd" stroke-width="0.9"/><path d="M3.6 4.4 L2 6 Q1 7 2 8 Q3 9 4 8 L5.6 6.4 M6.4 5.6 L8 4 Q9 3 8 2 Q7 1 6 2 L4.4 3.6" stroke="#ddd" stroke-width="0.9" fill="none"/></svg>
<div class="t" style="left:658.00px;top:413.81px;font-size:6.6px;color:#dddddd;">Animation</div>
<div class="a" style="left:658px;top:425px;width:133px;height:16.2px;background:#2e2e2e;border:1px solid #5a5a5a;border-radius:2.5px"></div>
<svg style="left:782.5px;top:431px" width="6" height="5" viewBox="0 0 6 5"><path d="M0 0 L5 0 L2.5 4 Z" fill="#ddd"/></svg>
<div class="a" style="left:652px;top:450.5px;width:168px;height:15px;background:#1c1c1c;"></div>
<div class="t" style="left:658.00px;top:454.68px;font-size:7.7px;color:#e8e8e8;">Format</div>
</body></html>
